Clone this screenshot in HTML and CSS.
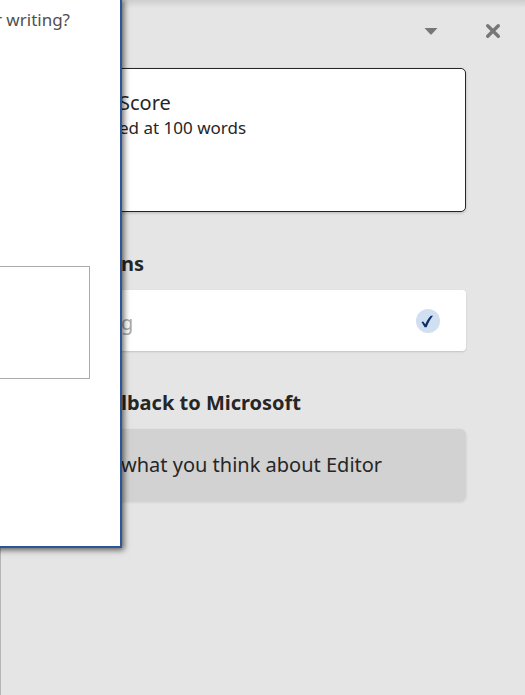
FILE: index.html
```html
<!DOCTYPE html>
<html lang="en">
<head>
<meta charset="utf-8">
<title>Editor</title>
<link rel="stylesheet" href="styles.css">
</head>
<body>
<main class="pane">
  <header class="pane-bar">
    <button class="icon-button" type="button" aria-label="Pane options">
      <svg width="14" height="8" viewBox="0 0 14 8"><path d="M0.5 1H13.5L7.5 7.5H6.5Z" fill="#777"/></svg>
    </button>
    <button class="icon-button" type="button" aria-label="Close pane">
      <svg width="16" height="16" viewBox="0 0 16 16"><path d="M2.7 2.7L13.3 13.3M13.3 2.7L2.7 13.3" stroke="#777" stroke-width="3.4" stroke-linecap="round"/></svg>
    </button>
  </header>
  <section class="score">
    <h1 class="score-title">Score</h1>
    <p class="score-note">ed at 100 words</p>
  </section>
  <h2 class="heading">ns</h2>
  <button class="card card-check" type="button">
    <span>g</span>
    <svg width="24" height="24" viewBox="0 0 24 24" aria-hidden="true"><circle cx="12" cy="12" r="12" fill="#d0dff2"/><path d="M5.5 13L7.2 12.6L9.3 15.2C10.8 12 12.6 9 14.8 6.8L17 6.8C14.5 9.8 12.4 13.7 10.6 18.2L8.6 18.2Z" fill="#0e2f66"/></svg>
  </button>
  <h2 class="heading">lback to Microsoft</h2>
  <button class="card card-feedback" type="button">what you think about Editor</button>
</main>
<div class="dialog" role="dialog" aria-label="Feedback">
  <label class="dialog-label" for="comment">r writing?</label>
  <textarea class="dialog-input" id="comment"></textarea>
</div>
</body>
</html>
```
FILE: styles.css
```css
* {
  box-sizing: border-box;
}

body {
  margin: 0;
  overflow: hidden;
  color: #262626;
  background: #e5e5e5;
  font-family: "Segoe UI", "Noto Sans", "Open Sans", sans-serif;
}

h1, h2, p {
  margin: 0;
}

button {
  font-family: inherit;
  color: inherit;
  border: 0;
}

.pane {
  min-height: 100vh;
  padding-right: 59px;
  border-left: 1px solid #b5b5b5;
  background: linear-gradient(#cecece, #e5e5e5 8px);
}

.pane-bar {
  display: flex;
  justify-content: flex-end;
  align-items: center;
  gap: 30px;
  height: 68px;
  margin-right: -43px;
  padding-bottom: 6px;
}

.icon-button {
  display: flex;
  align-items: center;
  justify-content: center;
  width: 32px;
  height: 32px;
  padding: 0;
  background: none;
}

.score {
  height: 144px;
  padding: 20px 24px 0 117px;
  border: 1px solid #262626;
  border-radius: 5px;
  background: #fff;
  box-shadow: 0 1px 3px rgba(0, 0, 0, 0.2);
}

.score-title {
  font-size: 20px;
  font-weight: 400;
  line-height: 28px;
}

.score-note {
  font-size: 17px;
  line-height: 22px;
}

.heading {
  padding: 36px 0 10px 120px;
  font-size: 20px;
  font-weight: 700;
  line-height: 32px;
}

.card {
  display: flex;
  align-items: center;
  justify-content: space-between;
  width: 100%;
  padding: 0 26px 0 120px;
  border: 0 solid #e5e5e5;
  border-radius: 4px;
  color: #aaa;
  font-size: 20px;
  line-height: 28px;
  text-align: left;
}

.card-check {
  height: 61px;
  background: #fff;
  box-shadow: 0 1px 2px rgba(0, 0, 0, 0.15);
}

.card-check > span {
  padding-top: 4px;
}

.card-feedback {
  height: 72px;
  border-radius: 6px;
  background: #d2d2d2;
  color: #262626;
  white-space: nowrap;
  box-shadow: 0 1px 3px rgba(0, 0, 0, 0.12);
}

.dialog {
  position: absolute;
  top: -2px;
  left: -80px;
  display: flex;
  flex-direction: column;
  width: 202px;
  height: 550px;
  padding: 8px 30px 0;
  border: 2px solid #2b579a;
  background: #fff;
  box-shadow: 2px 2px 6px rgba(0, 0, 0, 0.6);
}

.dialog-label {
  padding-right: 20px;
  color: #505050;
  font-size: 17px;
  line-height: 24px;
  text-align: right;
}

.dialog-input {
  height: 113px;
  margin: 234px 0 0;
  border: 1px solid #aaa;
  background: #fff;
  resize: none;
}
```
